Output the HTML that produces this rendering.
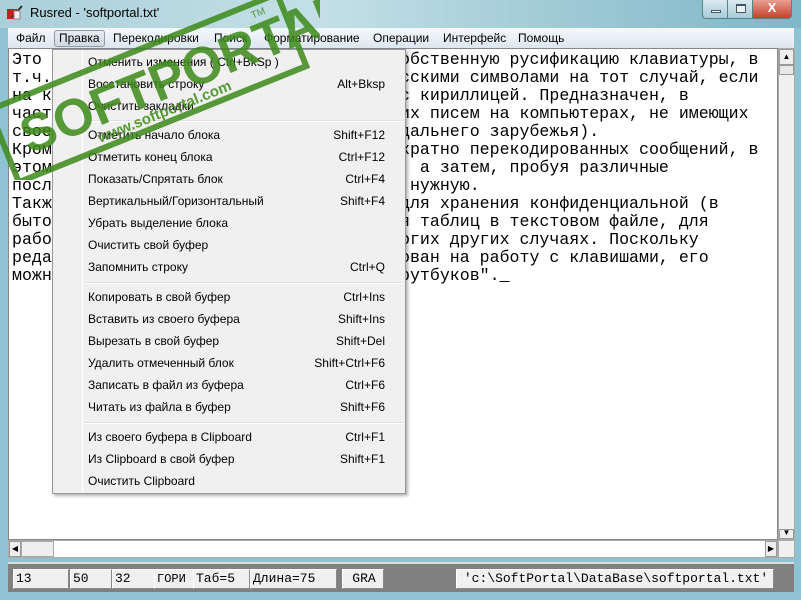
<!DOCTYPE html>
<html><head><meta charset="utf-8">
<style>
*{margin:0;padding:0;box-sizing:border-box}
body{width:801px;height:600px;overflow:hidden;position:relative;background:#8fc3d3;font-family:"Liberation Sans","DejaVu Sans",sans-serif}
.title{position:absolute;left:0;top:0;width:801px;height:28px;background:linear-gradient(90deg,#a9cfd9 0%,#c4e0e6 40%,#9fcad6 70%,#7fb7c9 100%)}
.title span{position:absolute;left:30px;top:5px;font-size:13px;color:#000}
.btn{position:absolute;top:0;height:19px;border:1px solid #5d7f8c;border-top:none}
.menubar{position:absolute;left:8px;top:28px;width:786px;height:20px;background:linear-gradient(#f4f8fb,#dde7f0);font-size:12px}
.menubar span{position:absolute;top:3px;color:#000}
.edit{position:absolute;left:8px;top:48px;width:770px;height:492px;background:#fff;border:1px solid #828790}
.mono{position:absolute;font-family:"Liberation Mono","DejaVu Sans Mono",monospace;font-size:16.6px;line-height:18px;white-space:pre;color:#000}
.vs{position:absolute;left:778px;top:48px;width:17px;height:492px;background:#f0f0f0;border:1px solid #aaa}
.hs{position:absolute;left:8px;top:540px;width:770px;height:18px;background:#fff;border:1px solid #aaa}
.status{position:absolute;left:8px;top:562px;width:786px;height:30px;background:#808080;border-top:2px solid #ddd}
.f{position:absolute;top:5px;height:20px;background:#f0f0f0;border:1px solid #fff;border-right-color:#888;border-bottom-color:#888;font-family:"Liberation Mono",monospace;font-size:13px;line-height:18px;padding-left:2px;color:#000}
.menu{position:absolute;left:52px;top:49px;width:354px;height:445px;background:#f0f0f0;border:1px solid #979797;box-shadow:2px 2px 3px rgba(0,0,0,.3);font-size:12px}
.menu .g{position:absolute;left:29px;top:0;width:1px;height:100%;background:#e2e3e3;border-right:1px solid #fff}
.it{position:absolute;left:35px;width:297px;color:#000}
.it b{position:absolute;right:0;font-weight:normal}
.sep{position:absolute;left:31px;width:320px;height:2px;border-top:1px solid #e0e0e0;border-bottom:1px solid #fff}
</style></head><body>
<div class="title">
<svg style="position:absolute;left:6px;top:5px" width="18" height="16"><rect x="1" y="4" width="10" height="10" fill="#c02020"/><path d="M6 12 L16 1" stroke="#333" stroke-width="2"/><rect x="8" y="6" width="6" height="8" fill="#eee" stroke="#888"/></svg>
<span>Rusred - 'softportal.txt'</span>
<div class="btn" style="left:702px;width:26px;background:linear-gradient(#d9eaf0,#a8cbd6);border-radius:0 0 0 4px"><div style="position:absolute;left:8px;top:10px;width:10px;height:3px;background:#fff;border:1px solid #456"></div></div>
<div class="btn" style="left:727px;width:26px;background:linear-gradient(#d9eaf0,#a8cbd6)"><div style="position:absolute;left:8px;top:4px;width:10px;height:9px;border:1px solid #456;border-top-width:2px;background:#eaf3f6"></div></div>
<div class="btn" style="left:752px;width:40px;background:linear-gradient(#e8a090,#c5412e);border-radius:0 0 4px 0;color:#fff;font-weight:bold;font-size:13px;text-align:center;line-height:16px">X</div>
</div>
<div class="menubar">
<span style="left:8px">Файл</span>
<div style="position:absolute;left:46px;top:2px;width:51px;height:17px;border:1px solid #8e9aa5;border-radius:3px;background:linear-gradient(#e6ecf2,#cfd8e2)"></div>
<span style="left:51px">Правка</span>
<span style="left:105px">Перекодировки</span>
<span style="left:206px">Поиск</span>
<span style="left:256px">Форматирование</span>
<span style="left:365px">Операции</span>
<span style="left:435px">Интерфейс</span>
<span style="left:510px">Помощь</span>
</div>
<div class="edit"></div>
<div class="mono" style="left:12px;top:51px">Это
т.ч.
на к
част
свое
Кром
этом
посл
Такж
быто
рабо
реда
можн</div>
<div class="mono" style="left:400px;top:51px">обственную русификацию клавиатуры, в
сскими символами на тот случай, если
с кириллицей. Предназначен, в
их писем на компьютерах, не имеющих
дальнего зарубежья).
кратно перекодированных сообщений, в
, а затем, пробуя различные
 нужную.
для хранения конфиденциальной (в
я таблиц в текстовом файле, для
огих других случаях. Поскольку
ован на работу с клавишами, его
рутбуков".<span style="text-decoration:underline">&nbsp;</span></div>
<div class="vs"><div style="position:absolute;left:0;top:0;width:15px;height:16px;border:1px solid #999;background:#eee;font-size:8px;text-align:center;line-height:14px">▲</div><div style="position:absolute;left:0;top:16px;width:15px;height:10px;border:1px solid #999;background:#e8e8e8"></div><div style="position:absolute;left:0;bottom:0;width:15px;height:10px;border:1px solid #999;background:#eee;font-size:8px;text-align:center;line-height:6px">▼</div></div>
<div class="hs"><div style="position:absolute;left:0;top:0;width:12px;height:16px;border:1px solid #999;background:#eee;font-size:8px;line-height:14px;text-align:center">◀</div><div style="position:absolute;left:12px;top:0;width:33px;height:16px;border:1px solid #aaa;background:#eee"></div><div style="position:absolute;right:0;top:0;width:12px;height:16px;border:1px solid #999;background:#eee;font-size:8px;line-height:14px;text-align:center">▶</div></div>
<div style="position:absolute;left:778px;top:540px;width:17px;height:18px;background:#f0f0f0;border:1px solid #aaa"></div>
<div class="status">
<div class="f" style="left:5px;width:56px">13</div>
<div class="f" style="left:62px;width:42px">50</div>
<div class="f" style="left:104px;width:43px">32</div>
<div class="f" style="left:146px;width:40px;font-size:12px">ГОРИ</div>
<div class="f" style="left:185px;width:57px">Таб=5</div>
<div class="f" style="left:242px;width:87px">Длина=75</div>
<div class="f" style="left:334px;width:42px;text-align:center">GRA</div>
<div class="f" style="left:448px;width:318px;text-align:center">'c:\SoftPortal\DataBase\softportal.txt'</div>
</div>
<div class="menu">
<div class="g"></div>
<div class="it" style="top:5px">Отменить изменения ( Ctrl+BkSp )</div>
<div class="it" style="top:27px">Восстановить строку<b>Alt+Bksp</b></div>
<div class="it" style="top:49px">Очистить закладки</div>
<div class="sep" style="top:70px"></div>
<div class="it" style="top:78px">Отметить начало блока<b>Shift+F12</b></div>
<div class="it" style="top:100px">Отметить конец блока<b>Ctrl+F12</b></div>
<div class="it" style="top:122px">Показать/Спрятать блок<b>Ctrl+F4</b></div>
<div class="it" style="top:144px">Вертикальный/Горизонтальный<b>Shift+F4</b></div>
<div class="it" style="top:166px">Убрать выделение блока</div>
<div class="it" style="top:188px">Очистить свой буфер</div>
<div class="it" style="top:210px">Запомнить строку<b>Ctrl+Q</b></div>
<div class="sep" style="top:232px"></div>
<div class="it" style="top:240px">Копировать в свой буфер<b>Ctrl+Ins</b></div>
<div class="it" style="top:262px">Вставить из своего буфера<b>Shift+Ins</b></div>
<div class="it" style="top:284px">Вырезать в свой буфер<b>Shift+Del</b></div>
<div class="it" style="top:306px">Удалить отмеченный блок<b>Shift+Ctrl+F6</b></div>
<div class="it" style="top:328px">Записать в файл из буфера<b>Ctrl+F6</b></div>
<div class="it" style="top:350px">Читать из файла в буфер<b>Shift+F6</b></div>
<div class="sep" style="top:372px"></div>
<div class="it" style="top:380px">Из своего буфера в Clipboard<b>Ctrl+F1</b></div>
<div class="it" style="top:402px">Из Clipboard в свой буфер<b>Shift+F1</b></div>
<div class="it" style="top:424px">Очистить Clipboard</div>
</div>
<svg style="position:absolute;left:0;top:0" width="320" height="180">
<g transform="rotate(-22 150 85)" fill="none" stroke="#3d8a1a" opacity="0.85">
<rect x="-8" y="48" width="310" height="78" stroke-width="6"/>
<text x="12" y="104" font-family="Liberation Sans" font-weight="bold" font-size="52" fill="#3d8a1a" stroke="none" letter-spacing="0">SOFTPORTAL</text>
<text x="270" y="62" font-family="Liberation Sans" font-size="10" fill="#3d8a1a" stroke="none">TM</text>
<text x="82" y="120" font-family="Liberation Sans" font-weight="bold" font-size="15" fill="#3d8a1a" stroke="none">www.softportal.com</text>
</g>
</svg>
</body></html>
